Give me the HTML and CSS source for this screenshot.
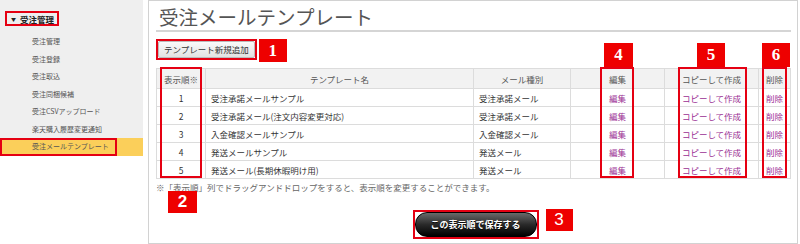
FILE: index.html
```html
<!DOCTYPE html>
<html>
    <head>
        <title>受注メールテンプレート</title>
        <link rel="stylesheet" href="styles.css">
    </head>
    <body>
        <div class="side">
            <div class="side-head"><span class="tri">▼</span>受注管理</div>
            <ul class="side-menu">
                <li>受注管理</li>
                <li>受注登録</li>
                <li>受注取込</li>
                <li>受注同梱候補</li>
                <li>受注CSVアップロード</li>
                <li>楽天購入履歴変更通知</li>
                <li class="current"><span>受注メールテンプレート</span></li>
            </ul>
        </div>

        <div class="main">
            <h1 class="page-title">受注メールテンプレート</h1>

            <div class="toolbar">
                <span class="mark-box"><button class="add-btn">テンプレート新規追加</button></span>
                <span class="badge">1</span>
            </div>

            <table class="tpl-table">
                <colgroup>
                    <col class="c-order">
                    <col class="c-name">
                    <col class="c-type">
                    <col class="c-edit">
                    <col class="c-copy">
                    <col class="c-del">
                </colgroup>
                <tr>
                    <th>表示順※</th>
                    <th>テンプレート名</th>
                    <th>メール種別</th>
                    <th>編集</th>
                    <th>コピーして作成</th>
                    <th>削除</th>
                </tr>
                <tr>
                    <td class="num">1</td>
                    <td>受注承諾メールサンプル</td>
                    <td>受注承諾メール</td>
                    <td class="lnk"><a href="#">編集</a></td>
                    <td class="lnk"><a href="#">コピーして作成</a></td>
                    <td class="lnk"><a href="#">削除</a></td>
                </tr>
                <tr>
                    <td class="num">2</td>
                    <td>受注承諾メール(注文内容変更対応)</td>
                    <td>受注承諾メール</td>
                    <td class="lnk"><a href="#">編集</a></td>
                    <td class="lnk"><a href="#">コピーして作成</a></td>
                    <td class="lnk"><a href="#">削除</a></td>
                </tr>
                <tr>
                    <td class="num">3</td>
                    <td>入金確認メールサンプル</td>
                    <td>入金確認メール</td>
                    <td class="lnk"><a href="#">編集</a></td>
                    <td class="lnk"><a href="#">コピーして作成</a></td>
                    <td class="lnk"><a href="#">削除</a></td>
                </tr>
                <tr>
                    <td class="num">4</td>
                    <td>発送メールサンプル</td>
                    <td>発送メール</td>
                    <td class="lnk"><a href="#">編集</a></td>
                    <td class="lnk"><a href="#">コピーして作成</a></td>
                    <td class="lnk"><a href="#">削除</a></td>
                </tr>
                <tr>
                    <td class="num">5</td>
                    <td>発送メール(長期休暇明け用)</td>
                    <td>発送メール</td>
                    <td class="lnk"><a href="#">編集</a></td>
                    <td class="lnk"><a href="#">コピーして作成</a></td>
                    <td class="lnk"><a href="#">削除</a></td>
                </tr>
            </table>

            <p class="note">※「表示順」列でドラッグアンドドロップをすると、表示順を変更することができます。</p>

            <div class="save-row">
                <div class="save-wrap">
                    <span class="mark-box"><button class="save-btn">この表示順で保存する</button></span>
                    <span class="badge badge-3">3</span>
                </div>
            </div>

            <!-- annotation marks over the table -->
            <div class="col-mark mark-order"></div>
            <div class="col-mark mark-edit"></div>
            <div class="col-mark mark-copy"></div>
            <div class="col-mark mark-del"></div>
            <span class="badge badge-2">2</span>
            <span class="badge badge-4">4</span>
            <span class="badge badge-5">5</span>
            <span class="badge badge-6">6</span>
        </div>
    </body>
</html>
```

FILE: styles.css
```css
*{
    box-sizing: border-box;
}
body{
    margin: 0;
    display: flex;
    gap: 5px;
    align-items: flex-start;
    font-family: "Noto Sans CJK JP", "Noto Sans", sans-serif;
    color: #333;
    background: #fff;
}

/* sidebar */
.side{
    width: 143px;
    flex-shrink: 0;
    background: #efefef;
    padding-top: 4px;
}
.side-head{
    display: inline-block;
    margin-left: 5px;
    height: 15px;
    padding: 0 3px 0 4px;
    border: 2px solid #e50012;
    font-size: 8.5px;
    line-height: 11px;
    font-weight: bold;
    color: #222;
}
.tri{
    font-size: 5px;
    vertical-align: 2px;
    margin-right: 4px;
}
.side-menu{
    list-style: none;
    margin: 5px 0 0 0;
    padding: 0;
}
.side-menu li{
    height: 17.5px;
    line-height: 17.5px;
    padding-left: 32px;
    font-size: 7px;
    color: #555;
}
.side-menu li.current{
    padding-left: 0;
    background: #fbcf5a;
}
.side-menu li.current span{
    display: block;
    width: 117px;
    height: 17.5px;
    padding-left: 30px;
    line-height: 13.5px;
    border: 2px solid #e50012;
}

/* main panel */
.main{
    position: relative;
    width: 650px;
    border: 1px solid #d2d2d2;
    padding: 0 6px 4px 7px;
}
.page-title{
    margin: 0;
    padding: 4px 0 1px 3px;
    font-size: 19.5px;
    line-height: 24px;
    font-weight: normal;
    color: #555;
    border-bottom: 2px solid #d5d5d5;
}
.toolbar{
    margin-top: 7px;
    display: flex;
    align-items: flex-start;
    gap: 2px;
    height: 23px;
}
.mark-box{
    display: inline-block;
    border: 2px solid #e50012;
}
.add-btn{
    display: block;
    height: 17px;
    padding: 0 5px;
    margin: 0;
    font-family: inherit;
    font-size: 8.5px;
    line-height: 15px;
    color: #333;
    border: 1px solid #bbb;
    border-radius: 2px;
    background: linear-gradient(#fafafa, #e2e2e2);
}
.badge{
    display: inline-block;
    width: 28px;
    height: 23px;
    background: #ee0000;
    color: #fff;
    font-family: "Liberation Serif", serif;
    font-weight: bold;
    font-size: 17px;
    line-height: 23px;
    text-align: center;
}

/* table */
.tpl-table{
    margin-top: 6px;
    width: 634px;
    table-layout: fixed;
    border-collapse: collapse;
    font-size: 8.5px;
}
.c-order{ width: 49px; }
.c-name{ width: 268px; }
.c-type{ width: 97px; }
.c-edit{ width: 94px; }
.c-copy{ width: 94px; }
.c-del{ width: 32px; }
.tpl-table th,
.tpl-table td{
    border: 1px solid #dcdcdc;
    padding: 0 5px;
    white-space: nowrap;
}
.tpl-table th{
    height: 20px;
    background: #f2f2f2;
    font-weight: normal;
    color: #555;
    text-align: center;
}
.tpl-table td{
    height: 18px;
    color: #333;
}
.tpl-table td.num,
.tpl-table td.lnk{
    text-align: center;
}
.tpl-table th:last-child,
.tpl-table td:last-child{
    padding: 0;
}
.tpl-table a{
    color: #9b2f94;
    text-decoration: none;
}
.note{
    margin: 2px 0 0 0;
    font-size: 8.5px;
    line-height: 12px;
    color: #666;
}

/* save button */
.save-row{
    margin-top: 16px;
    display: flex;
    justify-content: center;
    padding-left: 4px;
}
.save-wrap{
    position: relative;
}
.save-btn{
    display: block;
    width: 122px;
    height: 25px;
    margin: 0;
    padding: 0;
    font-family: inherit;
    font-size: 9px;
    font-weight: bold;
    color: #fff;
    text-shadow: 0 1px 1px #000;
    border: 1px solid #000;
    border-radius: 12px;
    background: linear-gradient(#6a6a6a, #2a2a2a 50%, #000);
}
.badge-3{
    position: absolute;
    left: 133px;
    top: 0;
    width: 27px;
    height: 22px;
    line-height: 22px;
    font-family: "Liberation Sans", sans-serif;
    font-weight: normal;
    font-size: 17px;
}

/* annotation overlays */
.col-mark{
    position: absolute;
    top: 66px;
    height: 111px;
    border: 2px solid #e50012;
}
.mark-order{ left: 11px; width: 42px; }
.mark-edit{ left: 451px; width: 34px; }
.mark-copy{ left: 529px; width: 69px; }
.mark-del{ left: 613px; width: 25px; }
.badge-2,
.badge-4,
.badge-5,
.badge-6{
    position: absolute;
    height: 24px;
    line-height: 24px;
}
.badge-2{ left: 19px; top: 190px; width: 29px; height: 22px; line-height: 22px; font-family: "Liberation Sans", sans-serif; }
.badge-4{ left: 455px; top: 42px; width: 29px; }
.badge-5{ left: 548px; top: 42px; }
.badge-6{ left: 613px; top: 42px; }
```
